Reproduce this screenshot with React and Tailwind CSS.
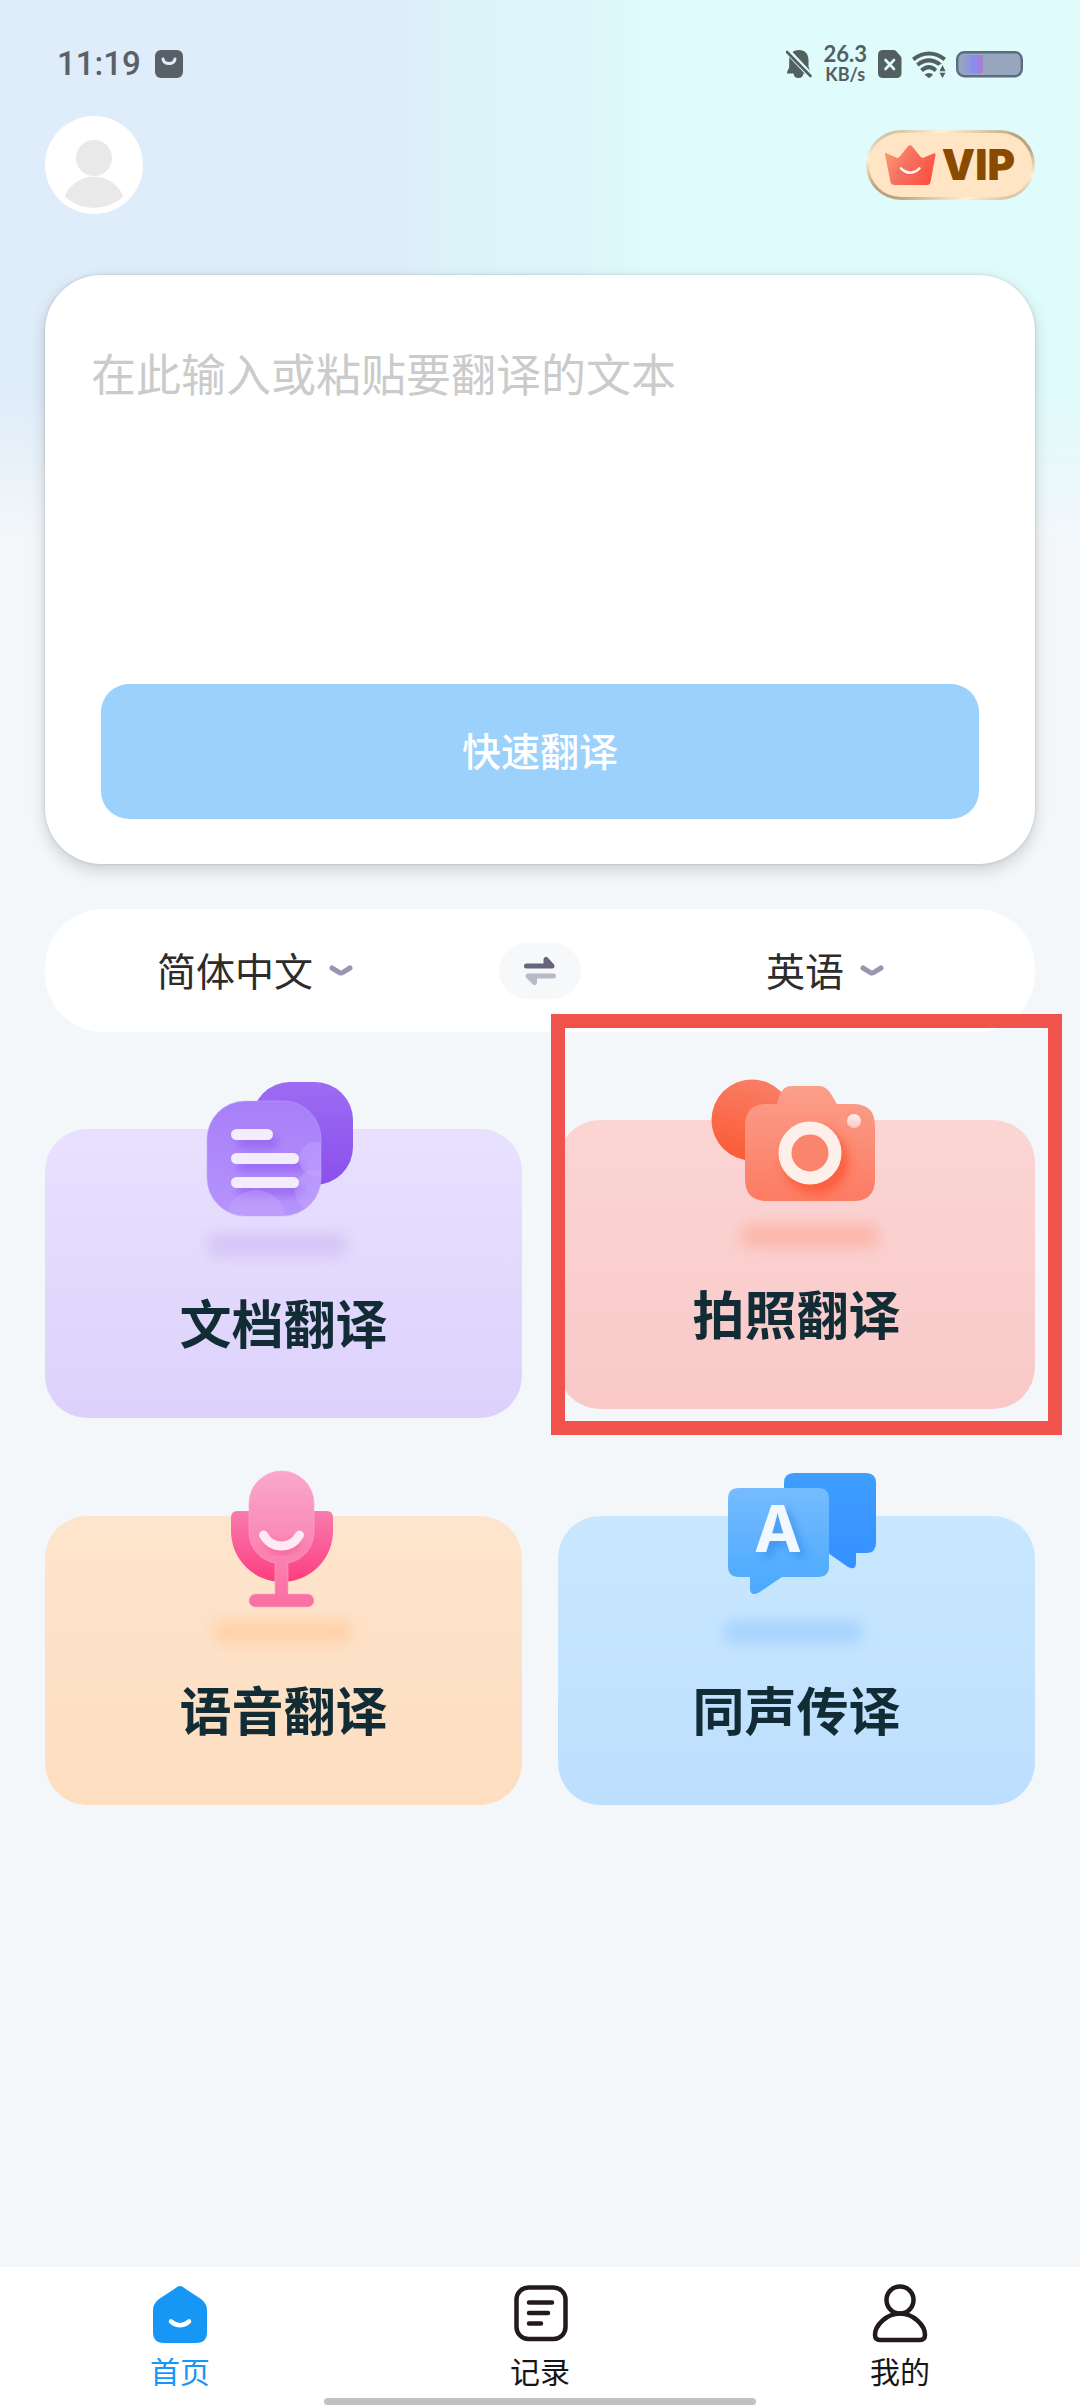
import React from "react";

function BellOffIcon() {
  return (
    <svg width="26" height="30" viewBox="0 0 26 30" aria-hidden="true">
      <path
        d="M13 1C19 1 22.500 5 22.500 11V17C22.500 20 24.500 21 24.500 24.500H17.500C17 27.500 15.500 29 12.500 29S8 27.500 7.500 24.500H1C1 21 3.200 20.500 3.200 17V11C3.200 5 7 1 13 1Z"
        fill="#536060"
      />
      <path d="M0 0.500L26 28" stroke="#e0fbfb" strokeWidth="6" />
      <path d="M1 3L24.500 27" stroke="#536060" strokeWidth="2.600" strokeLinecap="round" />
    </svg>
  );
}

function SimIcon() {
  return (
    <svg width="24" height="28" viewBox="0 0 24 28" aria-hidden="true">
      <path
        d="M5 0H15.500Q17 0 18 1L22.500 6Q23.500 7 23.500 8.500V23Q23.500 28 18.500 28H5Q0 28 0 23V5Q0 0 5 0Z"
        fill="#536060"
      />
      <path d="M7.500 10L16 19M16 10L7.500 19" stroke="#e0fbfb" strokeWidth="2.600" strokeLinecap="round" />
    </svg>
  );
}

function WifiIcon() {
  return (
    <svg width="34" height="28" viewBox="0 0 34 28" aria-hidden="true">
      <g fill="none" stroke="#536060" strokeWidth="4">
        <path d="M1.200 9.300Q17 -2.200 32.800 9.300" />
        <path d="M5.400 15Q17 5.800 28.400 15" />
        <path d="M9.500 20.500Q17 13.600 24 20.500" />
      </g>
      <path d="M12.500 24.500Q17 21.500 21.200 24.500L18 27.600Q17 28.400 16 27.600Z" fill="#536060" />
      <path d="M27.500 14.500H34V28H27.500L24.800 23.500V18Z" fill="#e0fbfb" />
      <path d="M30.500 15L33.500 21.200H27.500ZM30.500 28L33.500 22.800H27.500Z" fill="#536060" />
    </svg>
  );
}

function BatteryIcon() {
  return (
    <svg width="67" height="28" viewBox="0 0 67 28" aria-hidden="true">
      <defs>
        <linearGradient id="charge" x1="0" x2="1" y1="0" y2="0">
          <stop offset="0" stopColor="#97a5bd" />
          <stop offset="0.450" stopColor="#8b98dc" />
          <stop offset="0.500" stopColor="#8a8af0" />
          <stop offset="0.700" stopColor="#8a8af0" />
          <stop offset="0.800" stopColor="#a47fdd" />
          <stop offset="1" stopColor="#a083d0" />
        </linearGradient>
      </defs>
      <rect x="1.200" y="2.200" width="64.600" height="24" rx="7" fill="#97a5bd" stroke="#5d6b80" strokeWidth="2.400" />
      <rect x="4" y="5" width="23" height="18.500" rx="2" fill="url(#charge)" />
    </svg>
  );
}

function CrownIcon() {
  return (
    <svg width="52" height="42" viewBox="0 0 52 42" aria-hidden="true">
      <defs>
        <linearGradient id="crown" x1="0" x2="1" y1="0.200" y2="0.700">
          <stop offset="0" stopColor="#fb9a72" />
          <stop offset="0.450" stopColor="#f67060" />
          <stop offset="1" stopColor="#fd5040" />
        </linearGradient>
      </defs>
      <path
        d="M1 10.500Q0.500 8.500 2.500 9.200L12 13.500Q14 14.500 15.500 12.800L24 2.300Q26 0 28 2.300L36.500 12.800Q38 14.500 40 13.500L49.500 9.500Q52 8.500 51.500 11L46.500 38Q46 41 43 41H11Q7 41 6.500 38Z"
        fill="url(#crown)"
      />
      <path d="M17 25.500Q26 33 35.500 25.500" fill="none" stroke="#d33d2c" strokeOpacity="0.400" strokeWidth="3" strokeLinecap="round" />
      <path d="M17 24.500Q26 33 35.500 24.500" fill="none" stroke="#fff4ec" strokeWidth="2.600" strokeLinecap="round" />
    </svg>
  );
}

function ChevronIcon() {
  return (
    <svg width="24" height="12" viewBox="0 0 24 12" aria-hidden="true">
      <path d="M3 3L10.500 7.600Q12 8.500 13.500 7.600L21 3" fill="none" stroke="#9996b0" strokeWidth="5" strokeLinecap="round" strokeLinejoin="round" />
    </svg>
  );
}

function SwapIcon() {
  return (
    <svg width="32" height="30" viewBox="0 0 32 30" aria-hidden="true">
      <path d="M2.500 10H28L22 3.500V10Z" fill="#67647b" stroke="#67647b" strokeWidth="5" strokeLinecap="round" strokeLinejoin="round" />
      <path d="M29.500 20H4L10.500 26.500V20Z" fill="#b8bac8" stroke="#b8bac8" strokeWidth="5" strokeLinecap="round" strokeLinejoin="round" />
    </svg>
  );
}

function FloorShadow({ id, x, color }) {
  return (
    <>
      <defs>
        <filter id={id} x="-20%" y="-120%" width="140%" height="340%">
          <feGaussianBlur stdDeviation="7" />
        </filter>
      </defs>
      <rect x={x} y="154" width="138" height="24" rx="8" fill={color} filter={`url(#${id})`} />
    </>
  );
}

function DocumentArt() {
  return (
    <svg width="200" height="190" viewBox="0 0 200 190" aria-hidden="true">
      <FloorShadow id="docFloor" x="24" color="#d5c6f6" />
      <defs>
        <linearGradient id="docBack" x1="0" x2="0" y1="0" y2="1">
          <stop offset="0" stopColor="#9d6bf3" />
          <stop offset="1" stopColor="#8a50ec" />
        </linearGradient>
        <linearGradient id="docFront" x1="0" x2="0" y1="0" y2="1">
          <stop offset="0" stopColor="#a77ff8" />
          <stop offset="1" stopColor="#b694fc" />
        </linearGradient>
        <clipPath id="docClip">
          <rect x="23" y="22" width="114" height="115" rx="38" />
        </clipPath>
        <filter id="docBlur" x="-30%" y="-60%" width="160%" height="260%">
          <feGaussianBlur stdDeviation="4" />
        </filter>
      </defs>
      <rect x="68" y="3" width="101" height="103" rx="38" fill="url(#docBack)" />
      <rect x="23" y="22" width="114" height="115" rx="38" fill="url(#docFront)" />
      <g clipPath="url(#docClip)">
        <g fill="#8a50ec" fillOpacity="0.550" filter="url(#docBlur)">
          <rect x="53" y="57" width="42" height="12" rx="6" />
          <rect x="53" y="81" width="68" height="12" rx="6" />
          <rect x="53" y="105" width="68" height="12" rx="6" />
        </g>
        <g fill="#c9aefc" fillOpacity="0.350">
          <circle cx="132" cy="80" r="17" />
          <circle cx="132" cy="112" r="21" />
          <circle cx="72" cy="141" r="30" />
        </g>
      </g>
      <rect x="23" y="22" width="114" height="115" rx="38" fill="none" stroke="#c4a8ff" strokeOpacity="0.500" />
      <g fill="#f3ecfd">
        <rect x="47" y="50" width="42" height="11" rx="5.500" />
        <rect x="47" y="74" width="68" height="11" rx="5.500" />
        <rect x="47" y="98" width="68" height="11" rx="5.500" />
      </g>
    </svg>
  );
}

function CameraArt() {
  return (
    <svg width="200" height="190" viewBox="0 0 200 190" aria-hidden="true">
      <FloorShadow id="camFloor" x="44" color="#fbb8ac" />
      <defs>
        <linearGradient id="camBack" x1="0.700" x2="0.400" y1="0" y2="1">
          <stop offset="0" stopColor="#f97f67" />
          <stop offset="1" stopColor="#fb5c36" />
        </linearGradient>
        <linearGradient id="camBody" x1="0" x2="0" y1="0" y2="1">
          <stop offset="0" stopColor="#fa9f8b" />
          <stop offset="1" stopColor="#fd7b62" />
        </linearGradient>
        <linearGradient id="camDot" x1="0" x2="0" y1="0" y2="1">
          <stop offset="0" stopColor="#fff2ec" />
          <stop offset="1" stopColor="#f9c7c1" />
        </linearGradient>
        <filter id="camBlur" x="-40%" y="-40%" width="180%" height="180%">
          <feGaussianBlur stdDeviation="6" />
        </filter>
      </defs>
      <circle cx="55" cy="50" r="40.500" fill="url(#camBack)" />
      <path
        d="M70 34H80C82 28 84 16 94 16H122C132 16 136 28 140 34H156Q178 34 178 56V109Q178 131 156 131H70Q48 131 48 109V56Q48 34 70 34Z"
        fill="url(#camBody)"
      />
      <circle cx="119" cy="91" r="25" fill="none" stroke="#fb4f28" strokeOpacity="0.850" strokeWidth="13" filter="url(#camBlur)" />
      <circle cx="113" cy="83" r="20" fill="#fb846d" />
      <circle cx="113" cy="83" r="25" fill="none" stroke="#fdf0eb" strokeWidth="13" />
      <circle cx="157" cy="51" r="7" fill="url(#camDot)" />
    </svg>
  );
}

function MicArt() {
  return (
    <svg width="200" height="190" viewBox="0 0 200 190" aria-hidden="true">
      <FloorShadow id="micFloor" x="30" color="#ffd2ab" />
      <defs>
        <linearGradient id="micCup" x1="0" x2="0" y1="0" y2="1">
          <stop offset="0" stopColor="#f87cae" />
          <stop offset="1" stopColor="#fd3d80" />
        </linearGradient>
        <linearGradient id="micBody" gradientUnits="userSpaceOnUse" x1="0" x2="0" y1="5" y2="141">
          <stop offset="0" stopColor="#faa8cb" />
          <stop offset="0.600" stopColor="#f984b1" />
          <stop offset="1" stopColor="#f96fa2" />
        </linearGradient>
        <filter id="micBlur" x="-40%" y="-60%" width="180%" height="220%">
          <feGaussianBlur stdDeviation="4" />
        </filter>
      </defs>
      <path d="M53 45H143Q149 45 149 52V65A51 51 0 0 1 47 65V52Q47 45 53 45Z" fill="url(#micCup)" />
      <path
        d="M97.500 5A32.500 32.500 0 0 1 130 37.500V65C130 82 119 94 104 97V128H123.500A6.500 6.500 0 0 1 123.500 141H71.500A6.500 6.500 0 0 1 71.500 128H91V97C76 94 65 82 65 65V37.500A32.500 32.500 0 0 1 97.500 5Z"
        fill="url(#micBody)"
        stroke="#fba6c8"
        strokeOpacity="0.600"
      />
      <path d="M83 74Q98 94 115 74" fill="none" stroke="#f4508c" strokeOpacity="0.600" strokeWidth="9" filter="url(#micBlur)" />
      <path d="M79.500 69Q86 80 97.500 80T115.500 69" fill="none" stroke="#feeaf4" strokeWidth="9" strokeLinecap="round" />
    </svg>
  );
}

function SpeechArt() {
  return (
    <svg width="200" height="190" viewBox="0 0 200 190" aria-hidden="true">
      <FloorShadow id="talkFloor" x="27" color="#a9d4fe" />
      <defs>
        <linearGradient id="talkBack" x1="0" x2="0" y1="0" y2="1">
          <stop offset="0" stopColor="#3f9eff" />
          <stop offset="1" stopColor="#3590ff" />
        </linearGradient>
        <linearGradient id="talkFront" x1="0" x2="0" y1="0" y2="1">
          <stop offset="0" stopColor="#76bbfe" />
          <stop offset="1" stopColor="#4aa9ff" />
        </linearGradient>
        <filter id="letterShadow" x="-40%" y="-40%" width="180%" height="180%">
          <feDropShadow dx="6" dy="6" stdDeviation="4" floodColor="#2f86e6" floodOpacity="0.600" />
        </filter>
      </defs>
      <path
        d="M97 7H169Q179 7 179 17V77Q179 87 169 87H159V97Q159 105 151 101L131 87H97Q87 87 87 77V17Q87 7 97 7Z"
        fill="url(#talkBack)"
      />
      <path
        d="M42 22H121Q132 22 132 33V100Q132 111 121 111H85L62 126.500Q53 131 53 122V111H42Q31 111 31 100V33Q31 22 42 22Z"
        fill="url(#talkFront)"
      />
      <text x="81" y="86" textAnchor="middle" fontSize="64" fontWeight="700" fill="#f1f8ff" filter="url(#letterShadow)" className="font-[Inter,sans-serif]">
        A
      </text>
    </svg>
  );
}

function HomeIcon() {
  return (
    <svg width="60" height="60" viewBox="0 0 60 60" aria-hidden="true">
      <path
        d="M25 5.500Q30 0.500 35 5.500L51 16Q57 20.500 57 27V49Q57 60 46 60H14Q3 60 3 49V27Q3 20.500 9 16Z"
        fill="#1697f6"
      />
      <path d="M21 38.500Q30 46 39 38.500" fill="none" stroke="#fff" strokeWidth="4.500" strokeLinecap="round" />
    </svg>
  );
}

function RecordIcon() {
  return (
    <svg width="60" height="60" viewBox="0 0 60 60" aria-hidden="true">
      <g fill="none" stroke="#231b1a" strokeWidth="4.500" strokeLinecap="round">
        <rect x="6.500" y="4.500" width="49" height="51.500" rx="12" />
        <path d="M19 19.500H42M19 30H38M19 40.500H31" />
      </g>
    </svg>
  );
}

function UserIcon() {
  return (
    <svg width="60" height="60" viewBox="0 0 60 60" aria-hidden="true">
      <g fill="none" stroke="#231b1a" strokeWidth="4.500" strokeLinejoin="round">
        <circle cx="30" cy="17" r="13.500" />
        <path d="M30 30.500C43 30.500 55 42 55 52Q55 57 50 57H10Q5 57 5 52C5 42 17 30.500 30 30.500Z" />
      </g>
    </svg>
  );
}

function StatusBar() {
  return (
    <div className="flex h-12 items-center justify-between px-[57px]">
      <div className="flex items-center gap-3.5 text-[#5a6068]">
        <span className="font-[Roboto,sans-serif] text-[33px] leading-[48px] font-medium">11:19</span>
        <svg width="28" height="28" viewBox="0 0 28 28" aria-hidden="true">
          <rect width="28" height="28" rx="6" fill="#5a6068" />
          <path d="M8 9C9 15 19 15 20 9" fill="none" stroke="#dfecf9" strokeWidth="3" strokeLinecap="round" />
        </svg>
      </div>
      <div className="flex items-center text-[#536060]">
        <BellOffIcon />
        <div className="mx-[11px] flex flex-col items-center font-[Lato,sans-serif] font-bold">
          <span className="text-[22px] leading-[20px]">26.3</span>
          <span className="text-[18px] leading-[20px]">KB/s</span>
        </div>
        <SimIcon />
        <div className="mr-[10px] ml-[10px] flex">
          <WifiIcon />
        </div>
        <BatteryIcon />
      </div>
    </div>
  );
}

function Header() {
  return (
    <header className="mt-7 flex items-center justify-between px-[45px]">
      <button type="button" aria-label="个人头像" className="size-[98px] overflow-hidden rounded-full bg-white">
        <svg width="98" height="98" viewBox="0 0 98 98" aria-hidden="true">
          <defs>
            <clipPath id="avatarClip">
              <circle cx="49" cy="49" r="43" />
            </clipPath>
          </defs>
          <circle cx="49" cy="42" r="18" fill="#e9e9e9" />
          <circle cx="49" cy="92" r="31.500" fill="#e9e9e9" clipPath="url(#avatarClip)" />
        </svg>
      </button>
      <button
        type="button"
        className="h-[70px] rounded-full bg-[linear-gradient(160deg,#b9a47c_0%,#fff0da_22%,#b9a47c_45%,#b9a47c_60%,#fff0da_80%,#b9a47c_100%)] p-[3px]"
      >
        <span className="flex h-full items-center gap-[6px] rounded-full bg-[#ffe5c3] pr-[17px] pl-[15px]">
          <CrownIcon />
          <span className="font-[Inter,sans-serif] text-[42px] leading-[48px] font-black text-[#8a4b00]">VIP</span>
        </span>
      </button>
    </header>
  );
}

function TextCard() {
  return (
    <form
      onSubmit={(e) => e.preventDefault()}
      className="mx-[45px] mt-[61px] flex flex-col rounded-[56px] bg-white pt-[66px] pb-[45px] shadow-[0_6px_16px_rgba(0,0,0,0.16),0_0_3px_rgba(0,0,0,0.16)]"
    >
      <textarea
        aria-label="翻译文本"
        placeholder="在此输入或粘贴要翻译的文本"
        className="h-[343px] w-full resize-none bg-transparent px-[46px] text-[45px] leading-[64px] text-[#333333] outline-none placeholder:text-[#cbcbcb]"
      />
      <button type="submit" className="mx-[56px] h-[135px] rounded-[28px] bg-[#9bd1fb] pb-1 text-[39px] font-medium text-white">
        快速翻译
      </button>
    </form>
  );
}

function LanguageSelect({ label, value, others }) {
  return (
    <label className="flex items-center gap-4">
      <select
        aria-label={label}
        defaultValue={value}
        className="field-sizing-content appearance-none bg-transparent pb-1 text-[39px] leading-[56px] text-[#2c2c2c] outline-none"
      >
        <option>{value}</option>
        {others.map((o) => (
          <option key={o}>{o}</option>
        ))}
      </select>
      <ChevronIcon />
    </label>
  );
}

function LanguageBar() {
  return (
    <div className="mx-[45px] mt-[45px] flex h-[123px] items-center rounded-[58px] bg-white">
      <div className="flex flex-1 justify-center pr-[34px]">
        <LanguageSelect label="源语言" value="简体中文" others={["日语"]} />
      </div>
      <button type="button" aria-label="交换语言" className="flex h-[56px] w-[82px] items-center justify-center rounded-full bg-[#f7f8fa]">
        <SwapIcon />
      </button>
      <div className="flex flex-1 justify-center pl-[34px]">
        <LanguageSelect label="目标语言" value="英语" others={["日语"]} />
      </div>
    </div>
  );
}

function FeatureCard({ title, art, tone, children }) {
  return (
    <button type="button" className={`relative flex flex-col items-center rounded-[42px] pb-[60px] ${tone}`}>
      <span className="-mt-[50px] flex">{art}</span>
      <span className="mt-[17px] text-[52px] leading-[72px] font-bold text-[#122c36]">{title}</span>
      {children}
    </button>
  );
}

function Features() {
  return (
    <section className="mx-[45px] mt-[97px] grid grid-cols-2 gap-x-9 gap-y-[98px]">
      <FeatureCard title="文档翻译" art={<DocumentArt />} tone="bg-linear-to-b from-[#e8e1fe] to-[#ddd1fb]" />
      <FeatureCard title="拍照翻译" art={<CameraArt />} tone="-mt-[9px] mb-[9px] bg-linear-to-b from-[#fbd5d4] to-[#f9c9c9]">
        <span className="pointer-events-none absolute -top-[106px] -right-[27px] -bottom-[26px] -left-[7px] border-[14px] border-[#f0534c]" />
      </FeatureCard>
      <FeatureCard title="语音翻译" art={<MicArt />} tone="bg-linear-to-b from-[#fde5cd] to-[#fddec0]" />
      <FeatureCard title="同声传译" art={<SpeechArt />} tone="bg-linear-to-b from-[#c9e8ff] to-[#bddffe]" />
    </section>
  );
}

function TabBar() {
  const tabs = [
    { name: "首页", icon: <HomeIcon />, color: "text-[#1697f6]" },
    { name: "记录", icon: <RecordIcon />, color: "text-[#161616]" },
    { name: "我的", icon: <UserIcon />, color: "text-[#161616]" },
  ];
  return (
    <footer className="mt-auto bg-white pt-4 pb-[3px]">
      <nav className="grid grid-cols-3">
        {tabs.map((t) => (
          <a key={t.name} href="#" className={`flex flex-col items-center gap-[7px] ${t.color}`}>
            {t.icon}
            <span className="text-[30px] leading-10">{t.name}</span>
          </a>
        ))}
      </nav>
      <div className="mx-auto mt-2 h-[7px] w-2/5 rounded-full bg-[#c1c1c1]" />
    </footer>
  );
}

export default function App() {
  return (
    <div className="flex min-h-screen flex-col bg-[#f3f7fa] bg-[linear-gradient(to_bottom,transparent_390px,#f3f7fa_540px),linear-gradient(to_right,#dfecf9_36%,#dcf3fa_42%,#dcf5fa_53%,#e0fbfb_60%)] pt-10 font-[Noto_Sans_CJK_SC,sans-serif]">
      <StatusBar />
      <Header />
      <main>
        <TextCard />
        <LanguageBar />
        <Features />
      </main>
      <TabBar />
    </div>
  );
}
